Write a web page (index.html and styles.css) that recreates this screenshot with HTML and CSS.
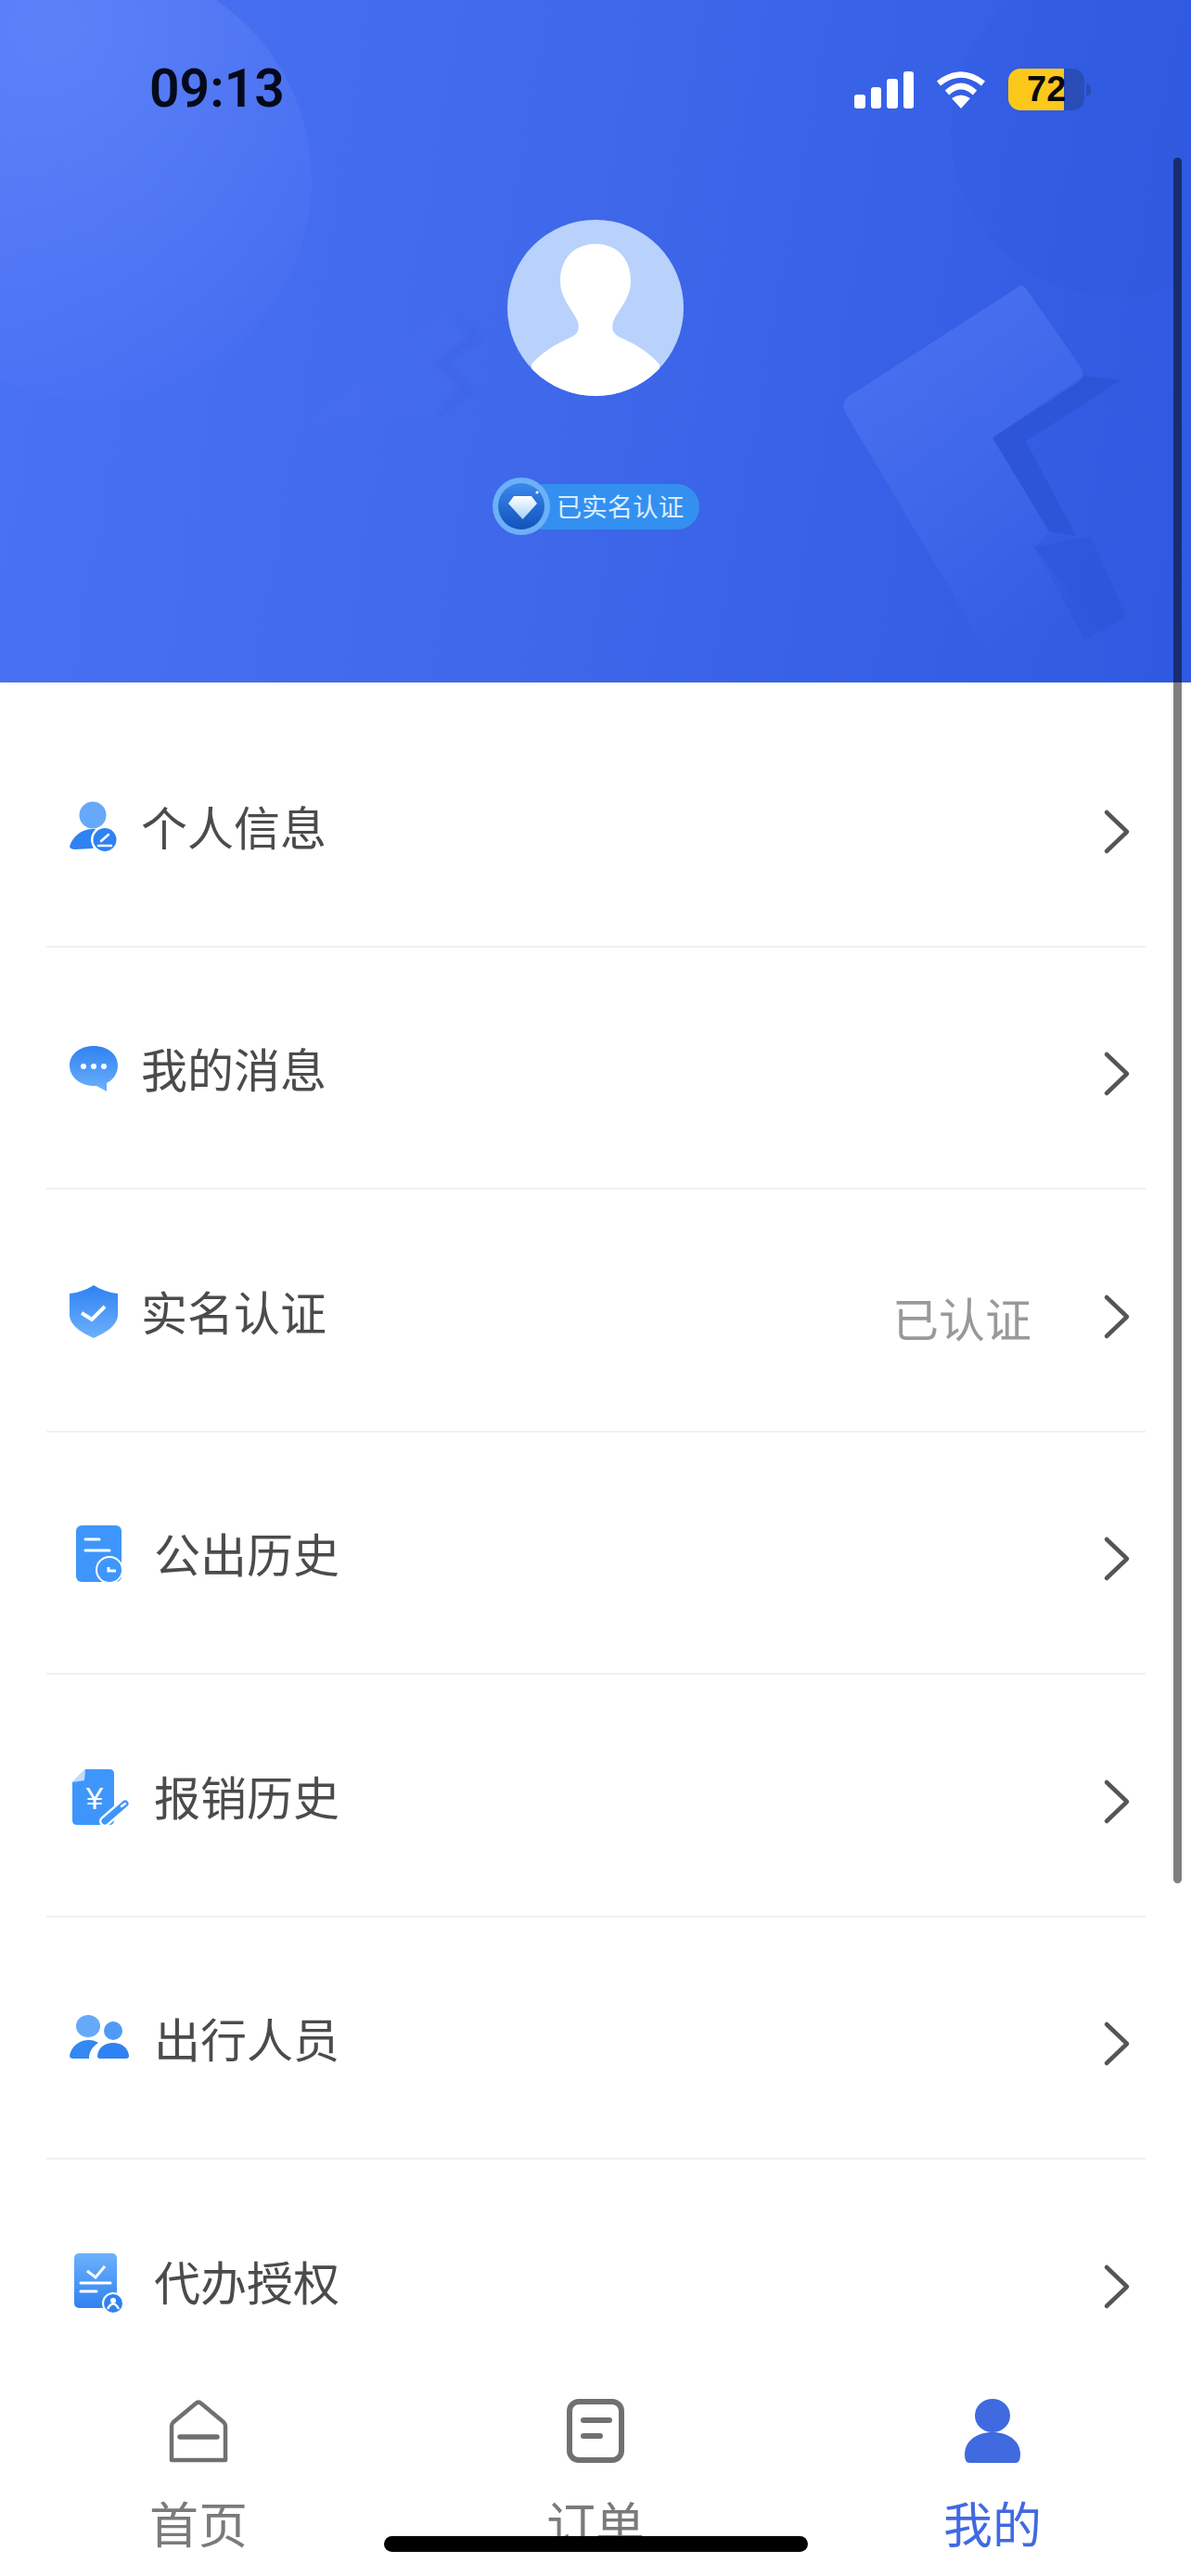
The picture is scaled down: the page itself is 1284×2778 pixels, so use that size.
FILE: index.html
```html
<!DOCTYPE html>
<html lang="zh-CN">
  <head>
    <meta charset="UTF-8" />
    <title>我的</title>
    <link rel="stylesheet" href="styles.css">
  </head>
  <body>
    <div class="page">
      <header class="header">
        <svg class="header-bg" viewBox="0 0 1284 736">
          <defs>
            <radialGradient id="spot" gradientUnits="userSpaceOnUse" cx="60" cy="30" r="400">
              <stop offset="0" stop-color="#7a98ff" stop-opacity="0.4" />
              <stop offset="1" stop-color="#7a98ff" stop-opacity="0.03" />
            </radialGradient>
            <linearGradient id="bolt" x1="0" y1="0" x2="0.3" y2="1">
              <stop offset="0" stop-color="#5f83fb" stop-opacity="0.5" />
              <stop offset="1" stop-color="#5f83fb" stop-opacity="0.02" />
            </linearGradient>
            <filter id="soft"><feGaussianBlur stdDeviation="3" /></filter>
          </defs>
          <circle cx="100" cy="195" r="236" fill="url(#spot)" />
          <circle cx="1205" cy="140" r="180" fill="#2a55d8" fill-opacity="0.12" />
          <path d="M1168 405 L1208 410 L1106 476 L1160 578 L1131 573 L1070 472 Z" fill="#2143bd" fill-opacity="0.3" />
          <path d="M1115 590 L1176 578 L1214 665 L1170 690 Z" fill="#2143bd" fill-opacity="0.18" />
          <path d="M1094 312 Q1102 303 1108 314 L1166 397 Q1170 405 1164 411 L1070 472 L1131 573 L1115 590 L1197 698 L1200 736 L1084 736 L912 446 Q906 436 914 428 Z" fill="url(#bolt)" />
          <path d="M330 455 L484 332 L518 365 L478 392 L508 422 L470 447 Z" fill="#5f83fb" fill-opacity="0.07" />
          <path d="M484 332 L518 365 L478 392 L508 422 L470 447 L498 420 L470 392 L508 362 Z" fill="#2a4fc8" fill-opacity="0.25" filter="url(#soft)" />
        </svg>

        <div class="status-bar">
          <span class="time">09:13</span>
          <div class="status-icons">
            <div class="signal">
              <i class="bar bar-1"></i>
              <i class="bar bar-2"></i>
              <i class="bar bar-3"></i>
              <i class="bar bar-4"></i>
            </div>
            <svg class="wifi" viewBox="0 0 54 40">
              <path d="M27 40 L17 29 Q27 22 37 29 Z" fill="#fff" />
              <path d="M12 23 Q27 9 42 23" fill="none" stroke="#fff" stroke-width="6.5" />
              <path d="M3 13 Q27 -6 51 13" fill="none" stroke="#fff" stroke-width="6.5" />
            </svg>
            <div class="battery">
              <div class="battery-fill"></div>
              <span class="battery-num">72</span>
            </div>
            <i class="battery-nub"></i>
          </div>
        </div>

        <svg class="avatar" viewBox="0 0 190 190">
          <circle cx="95" cy="95" r="95" fill="#b8d2fc" />
          <clipPath id="avatarClip"><circle cx="95" cy="95" r="95" /></clipPath>
          <path clip-path="url(#avatarClip)" d="M95 26 C72 26 57 42 57 66 C57 85 70 96 76 110 C78 119 76 123 68 127 C52 134 37 143 26 156 L26 190 L164 190 L164 156 C153 143 138 134 122 127 C114 123 112 119 114 110 C120 96 133 85 133 66 C133 42 118 26 95 26 Z" fill="#fff" />
        </svg>

        <div class="badge">
          <svg class="badge-icon" viewBox="0 0 64 64">
            <defs>
              <linearGradient id="badgeBlue" x1="0" y1="0" x2="0" y2="1">
                <stop offset="0" stop-color="#3a88ee" />
                <stop offset="1" stop-color="#1252bb" />
              </linearGradient>
              <linearGradient id="gem" x1="0" y1="0" x2="0" y2="1">
                <stop offset="0" stop-color="#ffffff" />
                <stop offset="1" stop-color="#a4d2f8" />
              </linearGradient>
            </defs>
            <circle cx="32" cy="32" r="31" fill="#6cb0f7" />
            <circle cx="32" cy="32" r="25" fill="url(#badgeBlue)" />
            <path d="M24 21 L43 21 L49 29 L33.5 46 L18 29 Z" fill="url(#gem)" />
            <circle cx="49" cy="17" r="1.6" fill="#fff" />
          </svg>
          <span class="badge-text">已实名认证</span>
        </div>
      </header>

      <ul class="menu">
        <li class="row">
          <svg class="icon" viewBox="0 0 90 70">
            <defs>
              <linearGradient id="lightTop" x1="0" y1="0" x2="0" y2="1">
                <stop offset="0" stop-color="#6db1fb" />
                <stop offset="1" stop-color="#2f82f2" />
              </linearGradient>
              <linearGradient id="darkTop" x1="0" y1="0" x2="0" y2="1">
                <stop offset="0" stop-color="#2f82f2" />
                <stop offset="1" stop-color="#6db1fb" />
              </linearGradient>
            </defs>
            <circle cx="50" cy="24" r="14.5" fill="#66a9f9" />
            <path d="M25 58 C28 47 38 39 50 39 C56 39 60 40 62 42 L50 60 L31 61 Q26 61 25 58 Z" fill="#2f82f2" />
            <circle cx="63" cy="50.5" r="15" fill="#fff" />
            <circle cx="63" cy="50.5" r="12.5" fill="#2f82f2" />
            <path d="M59 52 L67 45 M56 57 L70 57" stroke="#fff" stroke-width="2.5" stroke-linecap="round" />
          </svg>
          <span class="row-text">个人信息</span>
          <svg class="chevron" viewBox="0 0 30 50"><path d="M4 4 L26 25 L4 46" /></svg>
        </li>
        <li class="row">
          <svg class="icon" viewBox="0 0 90 70">
            <path d="M51 12 C66 12 77 21 77 33 C77 43 71 49 65 52 L65 61 L54 55 L51 55 C36 55 25 45 25 33 C25 21 36 12 51 12 Z" fill="url(#darkTop)" />
            <circle cx="40" cy="34" r="3" fill="#fff" />
            <circle cx="51" cy="34" r="3" fill="#fff" />
            <circle cx="62" cy="34" r="3" fill="#fff" />
          </svg>
          <span class="row-text">我的消息</span>
          <svg class="chevron" viewBox="0 0 30 50"><path d="M4 4 L26 25 L4 46" /></svg>
        </li>
        <li class="row">
          <svg class="icon" viewBox="0 0 90 70">
            <path d="M51 8 C59 13 68 16 77 17 L77 40 C77 52 62 60 51 65 C40 60 25 52 25 40 L25 17 C34 16 43 13 51 8 Z" fill="url(#darkTop)" />
            <path d="M38 38 L49 45 L63 31" fill="none" stroke="#fff" stroke-width="4" />
          </svg>
          <span class="row-text">实名认证</span>
          <span class="row-value">已认证</span>
          <svg class="chevron chevron-tight" viewBox="0 0 30 50"><path d="M4 4 L26 25 L4 46" /></svg>
        </li>
        <li class="row row-wide">
          <svg class="icon" viewBox="0 0 90 70">
            <rect x="32" y="6" width="49" height="61" rx="6" fill="#3f96fa" />
            <path d="M42 21 L57 21 M42 33 L68 33" stroke="#fff" stroke-width="3" stroke-linecap="round" />
            <circle cx="68" cy="54" r="15" fill="#fff" />
            <circle cx="68" cy="54" r="13" fill="#3f96fa" />
            <path d="M67 51 L67 55 L75 55" fill="none" stroke="#fff" stroke-width="3" />
          </svg>
          <span class="row-text">公出历史</span>
          <svg class="chevron" viewBox="0 0 30 50"><path d="M4 4 L26 25 L4 46" /></svg>
        </li>
        <li class="row row-wide">
          <svg class="icon" viewBox="0 0 90 70">
            <path d="M42 7 L68 7 Q73 7 73 12 L73 62 Q73 67 68 67 L33 67 Q28 67 28 62 L28 21 Z" fill="#3f96fa" />
            <path d="M42 7 L41 19 L28 21 Z" fill="#c5ddfc" />
            <text class="yen" x="52" y="50">¥</text>
            <path d="M63 63 L85 44" stroke="#fff" stroke-width="12" stroke-linecap="round" />
            <path d="M63 63 L85 44" stroke="#3f96fa" stroke-width="7" stroke-linecap="round" />
            <path d="M81 47 L85 44" stroke="#fff" stroke-width="2.5" stroke-linecap="round" />
          </svg>
          <span class="row-text">报销历史</span>
          <svg class="chevron" viewBox="0 0 30 50"><path d="M4 4 L26 25 L4 46" /></svg>
        </li>
        <li class="row row-wide">
          <svg class="icon" viewBox="0 0 90 70">
            <ellipse cx="45" cy="23" rx="13" ry="12" fill="#66a9f9" />
            <path d="M25 55 C27 44 36 38 46 38 C50 38 53 39 56 41 C50 45 46 50 46 58 L29 58 Q25 58 25 55 Z" fill="#3488f4" />
            <circle cx="72" cy="28" r="10" fill="#4f9af7" />
            <path d="M55 55 C56 46 63 41 72 41 C81 41 88 46 89 55 Q89 58 86 58 L58 58 Q55 58 55 55 Z" fill="#2f82f2" />
          </svg>
          <span class="row-text">出行人员</span>
          <svg class="chevron" viewBox="0 0 30 50"><path d="M4 4 L26 25 L4 46" /></svg>
        </li>
        <li class="row row-wide">
          <svg class="icon" viewBox="0 0 90 70">
            <rect x="30" y="6" width="46" height="59" rx="5" fill="url(#lightTop)" />
            <path d="M44 25 L53 32 L63 20" fill="none" stroke="#fff" stroke-width="3" />
            <path d="M37 38 L69 38 M37 47 L54 47" stroke="#fff" stroke-width="3" stroke-linecap="round" />
            <circle cx="72" cy="60" r="12" fill="#fff" />
            <circle cx="72" cy="60" r="10" fill="#2f82f2" />
            <circle cx="72" cy="57" r="3" fill="#fff" />
            <path d="M66 66 Q72 55 78 66" fill="none" stroke="#fff" stroke-width="2.5" />
          </svg>
          <span class="row-text">代办授权</span>
          <svg class="chevron" viewBox="0 0 30 50"><path d="M4 4 L26 25 L4 46" /></svg>
        </li>
      </ul>

      <nav class="tabbar">
        <div class="tab">
          <svg class="tab-icon" viewBox="0 0 64 70">
            <path d="M3 66 L3 29 Q3 27 5 25 L29 5 Q32 2 35 5 L59 25 Q61 27 61 29 L61 66 Z" fill="none" stroke="#707070" stroke-width="4.5" stroke-linejoin="round" />
            <path d="M12 41 L52 41" stroke="#707070" stroke-width="5.5" stroke-linecap="round" />
          </svg>
          <span class="tab-label">首页</span>
        </div>
        <div class="tab">
          <svg class="tab-icon" viewBox="0 0 64 70">
            <rect x="4" y="3" width="56" height="63" rx="10" fill="none" stroke="#707070" stroke-width="6" />
            <path d="M19 23 L47 23 M19 40 L37 40" stroke="#707070" stroke-width="6" stroke-linecap="round" />
          </svg>
          <span class="tab-label">订单</span>
        </div>
        <div class="tab tab-active">
          <svg class="tab-icon" viewBox="0 0 64 70">
            <ellipse cx="32" cy="18" rx="19" ry="18" fill="#3f6ae0" />
            <path d="M2 60 C2 46 14 36 32 36 C50 36 62 46 62 60 Q62 69 57 69 L7 69 Q2 69 2 60 Z" fill="#3f6ae0" />
          </svg>
          <span class="tab-label">我的</span>
        </div>
      </nav>

      <div class="scrollbar"></div>
      <div class="home-indicator"></div>
    </div>
  </body>
</html>
```

FILE: styles.css
```css
* {
  box-sizing: border-box;
}

html,
body {
  margin: 0;
  padding: 0;
}

body {
  font-family: "Noto Sans CJK SC", "Liberation Sans", sans-serif;
  background-color: #fff;
}

.page {
  position: relative;
  width: 1284px;
  height: 2778px;
  overflow: hidden;
  display: flex;
  flex-direction: column;
}

/* header */
.header {
  position: relative;
  height: 736px;
  flex-shrink: 0;
  display: flex;
  flex-direction: column;
  align-items: center;
  background: linear-gradient(100deg, #4a72f5 0%, #3e67ea 50%, #2e59e0 100%);
}

.header-bg {
  position: absolute;
  left: 0;
  top: 0;
  width: 1284px;
  height: 736px;
}

.status-bar {
  position: relative;
  width: 100%;
  height: 122px;
  padding: 66px 108px 0 161px;
  display: flex;
  justify-content: space-between;
}

.time {
  font-family: Roboto, "Liberation Sans", sans-serif;
  font-size: 57px;
  font-weight: 600;
  line-height: 60px;
  color: #050a1a;
}

.status-icons {
  display: flex;
  align-items: flex-end;
  height: 51px;
}

.signal {
  display: flex;
  align-items: flex-end;
  gap: 6px;
  height: 40px;
}

.bar {
  display: block;
  width: 11.5px;
  background-color: #fff;
  border-radius: 3px;
}

.bar-1 { height: 15px; }
.bar-2 { height: 23px; }
.bar-3 { height: 32px; }
.bar-4 { height: 40px; }

.wifi {
  width: 54px;
  height: 40px;
  margin-left: 24px;
}

.battery {
  position: relative;
  width: 82px;
  height: 45px;
  margin-left: 24px;
  margin-bottom: -2px;
  background-color: #2a4db8;
  border-radius: 13px;
  overflow: hidden;
}

.battery-fill {
  width: 60px;
  height: 100%;
  background-color: #fcc81a;
}

.battery-num {
  position: absolute;
  left: 20px;
  top: 0;
  font-family: "Liberation Sans", sans-serif;
  font-size: 38px;
  font-weight: bold;
  line-height: 45px;
  color: #0a0a0a;
}

.battery-nub {
  display: block;
  width: 5px;
  height: 14px;
  margin: 0 0 13px 2px;
  background-color: #2a4db8;
  border-radius: 0 5px 5px 0;
}

.avatar {
  position: relative;
  width: 190px;
  height: 190px;
  margin-top: 115px;
}

.badge {
  position: relative;
  display: flex;
  align-items: center;
  margin-top: 87px;
}

.badge-icon {
  position: relative;
  width: 64px;
  height: 64px;
  z-index: 1;
}

.badge-text {
  margin-left: -32px;
  padding: 0 17px 0 38px;
  height: 49px;
  line-height: 47px;
  font-size: 27.5px;
  white-space: nowrap;
  color: #dcecff;
  background-color: #3390f0;
  border-radius: 25px;
}

/* menu list */
.menu {
  list-style: none;
  margin: 0;
  padding: 24px 0 0;
  flex: 1;
  overflow: hidden;
}

.row {
  display: flex;
  align-items: center;
  height: 261.5px;
  margin: 0 49px 0 50px;
  padding-right: 16px;
  border-bottom: 2px solid #f1f1f1;
}

.icon {
  width: 90px;
  height: 70px;
  flex-shrink: 0;
}

.row-text {
  margin-left: 12px;
  font-size: 50px;
  line-height: 70px;
  color: #4b4b4b;
}

.row-wide .row-text {
  margin-left: 26px;
}

.row-value {
  margin-left: auto;
  margin-top: 14px;
  font-size: 50px;
  line-height: 70px;
  color: #999;
}

.chevron {
  width: 30px;
  height: 50px;
  margin-left: auto;
  margin-top: 14px;
  flex-shrink: 0;
}

.chevron-tight {
  margin-left: 77px;
}

.chevron path {
  fill: none;
  stroke: #555;
  stroke-width: 4.5;
  stroke-linecap: round;
  stroke-linejoin: round;
}

.yen {
  font-family: "Liberation Sans", sans-serif;
  font-size: 33px;
  fill: #fff;
  text-anchor: middle;
}

/* bottom tabs */
.tabbar {
  height: 238px;
  flex-shrink: 0;
  display: grid;
  grid-template-columns: repeat(3, 1fr);
  padding-top: 47px;
  background-color: #fff;
}

.tab {
  display: flex;
  flex-direction: column;
  align-items: center;
}

.tab-icon {
  width: 64px;
  height: 70px;
}

.tab-label {
  margin-top: 31px;
  font-size: 53px;
  line-height: 64px;
  color: #7a7a7a;
}

.tab-active .tab-label {
  color: #4169e1;
}

.scrollbar {
  position: absolute;
  left: 1265px;
  top: 170px;
  width: 9px;
  height: 1861px;
  background-color: rgba(0, 0, 0, 0.5);
  border-radius: 5px;
}

.home-indicator {
  position: absolute;
  left: 414px;
  top: 2735px;
  width: 457px;
  height: 17px;
  background-color: #000;
  border-radius: 9px;
}
```
